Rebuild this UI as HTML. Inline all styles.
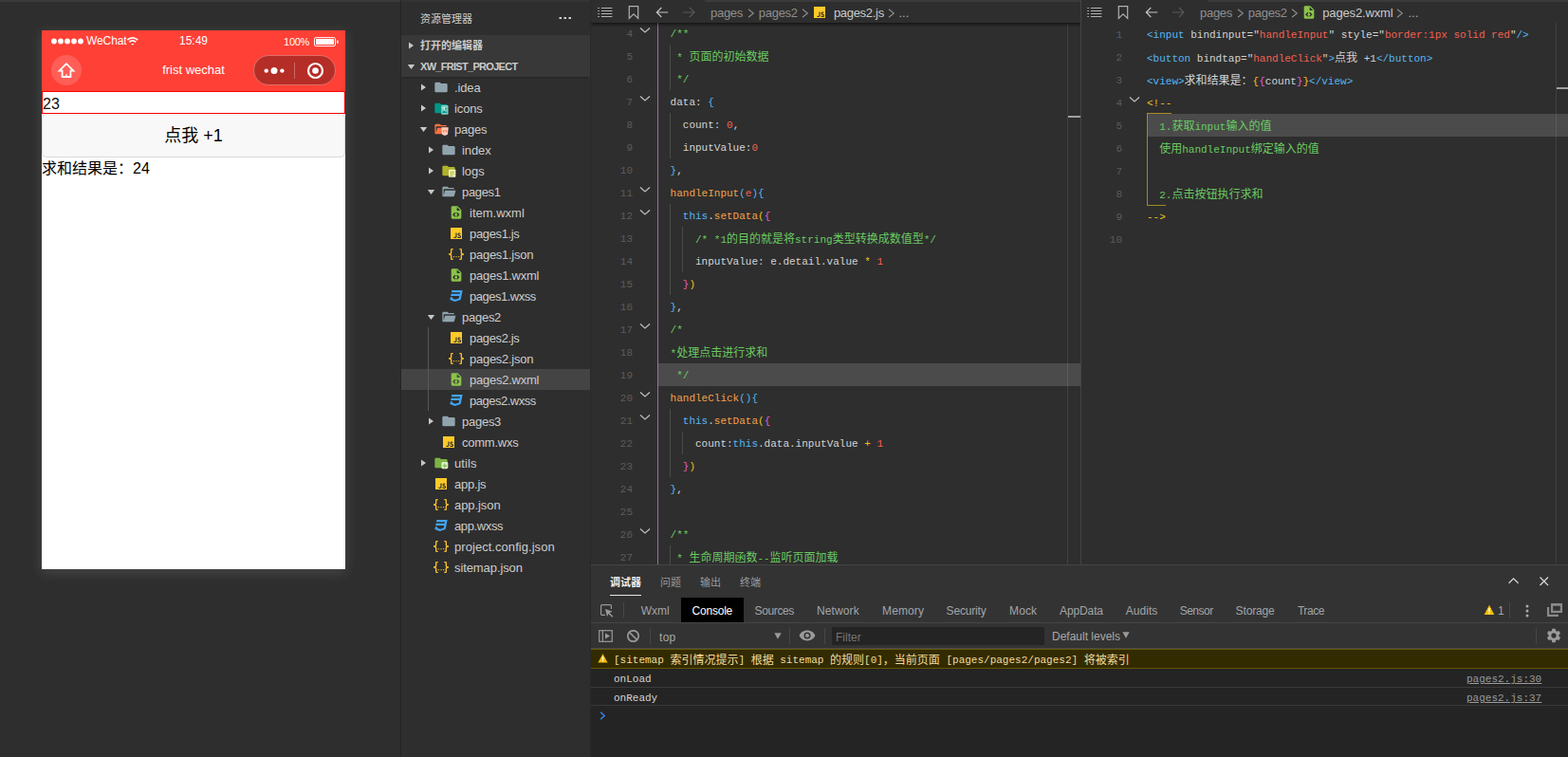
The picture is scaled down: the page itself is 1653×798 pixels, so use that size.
<!DOCTYPE html>
<html lang="zh"><head><meta charset="utf-8"><title>WeChat DevTools</title>
<style>
*{box-sizing:border-box;margin:0;padding:0}
html,body{width:1653px;height:798px;overflow:hidden;background:#2e2e2e}
body{position:relative;font-family:"Liberation Sans",sans-serif;color:#ccc;font-size:13px}
.abs{position:absolute}
.cj{display:inline-block;position:relative;white-space:nowrap;overflow:visible;vertical-align:baseline;letter-spacing:0;line-height:inherit;font-family:"Liberation Sans","Noto Sans CJK SC",sans-serif}
.mono{font-family:"Liberation Mono",monospace}
/* simulator */
#sim{left:0;top:0;width:422px;height:798px;background:#2e2e2e}
#simtop{left:0;top:0;width:422px;height:2px;background:#3a3a3a}
#phone{left:44px;top:32px;width:320px;height:568px;background:#fff;box-shadow:0 3px 12px 1px rgba(255,255,255,.12)}
#phead{left:0;top:0;width:320px;height:64px;background:#fe4036}
#vdiv{left:422px;top:0;width:1px;height:798px;background:#242424}
/* sidebar */
#side{left:423px;top:0;width:199px;height:798px;background:#2e2e2e}
.row{position:absolute;left:0;width:199px;height:22px;line-height:22px;white-space:nowrap;color:#cccccc;font-size:13px}
.row .lbl{position:absolute;top:0}
.sec{background:#383838;font-weight:bold;font-size:11px;color:#ccc}
/* editors */
.ed{background:#2e2e2e;overflow:hidden}
.bc{position:absolute;left:0;top:0;height:24px;width:100%;background:#2e2e2e;box-shadow:0 2px 3px rgba(0,0,0,.45);z-index:3;color:#9a9a9a;font-size:13px;line-height:24px}
.ln{position:absolute;height:24px;line-height:26px;font-family:"Liberation Mono",monospace;font-size:11px;white-space:pre;color:#d4d4d4}
.num{position:absolute;height:24px;line-height:26px;font-family:"Liberation Mono",monospace;font-size:11px;color:#5c5c5c;text-align:right;width:30px}
.g{color:#6acb62}.b{color:#56b6f2}.o{color:#f5a04a}.r{color:#f4604f}.y{color:#f1c21b}.p{color:#e35dd0}.w{color:#d4d4d4}
.guide{position:absolute;width:1px;background:#4a4a4a}
/* bottom panel */
.tab{font-size:12px;line-height:16px;height:16px;white-space:nowrap}
.con{font-family:"Liberation Mono",monospace;font-size:11px;line-height:18px;height:18px;white-space:pre}
#dbg{left:623px;top:595px;width:1030px;height:203px;background:#333333}
</style></head>
<body>

<div id="sim" class="abs"><div id="simtop" class="abs"></div>
<div id="phone" class="abs">
 <div id="phead" class="abs">
  <svg class="abs" style="left:0;top:0" width="320" height="64" viewBox="0 0 320 64">
   <g fill="#fff">
    <circle cx="13" cy="11.5" r="2.9"/><circle cx="20" cy="11.5" r="2.9"/><circle cx="27" cy="11.5" r="2.9"/><circle cx="34" cy="11.5" r="2.9"/><circle cx="41" cy="11.5" r="2.9"/>
   </g>
   <!-- wifi -->
   <g fill="none" stroke="#fff" stroke-width="1.7" stroke-linecap="butt">
    <path d="M90.3 10.2 A7.6 7.6 0 0 1 101.2 10.2"/>
    <path d="M92.4 12.3 A4.7 4.7 0 0 1 99.1 12.3"/>
   </g>
   <path d="M94.2 14 L97.3 14 L95.75 15.8 Z" fill="#fff"/>
   <!-- battery -->
   <rect x="287.5" y="7.6" width="22" height="9" rx="1.6" fill="none" stroke="#fff" stroke-width="1"/>
   <rect x="289" y="9.1" width="19" height="6" rx="0.6" fill="#fff"/>
   <path d="M311 10.4 h0.8 a0.9 0.9 0 0 1 0.9 0.9 v1.6 a0.9 0.9 0 0 1 -0.9 0.9 h-0.8 z" fill="#fff"/>
   <!-- home -->
   <circle cx="26" cy="42" r="16" fill="#ffffff" fill-opacity="0.16"/>
   <path d="M26 35.2 L18.6 42.6 L21.6 42.6 L21.6 49 L30.4 49 L30.4 42.6 L33.4 42.6 Z" fill="none" stroke="#fff" stroke-width="1.8" stroke-linejoin="miter"/>
   <rect x="25.3" y="46.2" width="1.4" height="2.8" fill="#fff"/>
   <!-- capsule -->
   <rect x="223.5" y="26.5" width="86" height="31" rx="15.5" fill="#000" fill-opacity="0.29" stroke="#ffffff" stroke-opacity="0.28" stroke-width="1"/>
   <circle cx="236.7" cy="42.6" r="2.2" fill="#fff"/><circle cx="245" cy="42.4" r="3.5" fill="#fff"/><circle cx="253.4" cy="42.6" r="2.2" fill="#fff"/>
   <rect x="266" y="34" width="1" height="17" fill="#fff" fill-opacity="0.3"/>
   <circle cx="288.5" cy="42.5" r="7.5" fill="none" stroke="#fff" stroke-width="2.2"/>
   <circle cx="288.5" cy="42.5" r="3.3" fill="#fff"/>
  </svg>
  <div class="abs" style="left:47px;top:4px;font-size:12px;line-height:14px;color:#fff;letter-spacing:-0.1px">WeChat</div>
  <div class="abs" style="left:120px;top:4px;width:80px;text-align:center;font-size:12px;line-height:14px;color:#fff">15:49</div>
  <div class="abs" style="left:240px;top:5px;width:42px;text-align:right;font-size:11px;line-height:14px;color:#fff;letter-spacing:-0.3px">100%</div>
  <div class="abs" style="left:100px;top:33px;width:120px;text-align:center;font-size:13px;line-height:18px;color:#fff">frist wechat</div>
 </div>
 <div class="abs" style="left:0;top:64px;width:320px;height:24px;border:1px solid #f00;background:#fff"></div>
 <div class="abs" style="left:1px;top:69px;font-size:16px;line-height:18px;color:#111">23</div>
 <div class="abs" style="left:0;top:88px;width:320px;height:46px;background:#f8f8f8;border-radius:5px;border:1px solid rgba(0,0,0,.12);border-top-color:rgba(0,0,0,.05)"></div>
 <div class="abs" style="left:0;top:88px;width:320px;height:46px;line-height:46px;text-align:center;font-size:18px;color:#000"><span class="cj" style="width:36px">点我</span> +1</div>
 <div class="abs" style="left:0;top:134px;height:24px;line-height:24px;font-size:16px;color:#000;white-space:nowrap"><span class="cj" style="width:96px">求和结果是：</span>24</div>
</div></div>
<div id="vdiv" class="abs"></div>

<svg width="0" height="0" style="position:absolute"><defs>
<symbol id="i-folder" viewBox="0 0 24 24"><path d="M10 4H4c-1.1 0-2 .9-2 2v12a2 2 0 002 2h16a2 2 0 002-2V8c0-1.1-.9-2-2-2h-8l-2-2z"/></symbol>
<symbol id="i-fopen" viewBox="0 0 24 24"><path d="M19 20H4c-1.11 0-2-.9-2-2V6c0-1.11.89-2 2-2h6l2 2h7a2 2 0 012 2H4v10l2.14-8h17.07l-2.28 8.5c-.23.87-1.01 1.5-1.93 1.5z"/></symbol>
<symbol id="i-js" viewBox="0 0 24 24"><path fill="#ffca28" d="M3 3h18v18H3V3m4.73 15.04c.4.85 1.19 1.55 2.54 1.55 1.5 0 2.53-.8 2.53-2.55v-5.78h-1.7V17c0 .86-.35 1.08-.9 1.08-.58 0-.82-.4-1.09-.87l-1.38.83m5.98-.18c.5.98 1.51 1.73 3.09 1.73 1.6 0 2.8-.83 2.8-2.36 0-1.41-.81-2.04-2.25-2.66l-.42-.18c-.73-.31-1.04-.52-1.04-1.02 0-.41.31-.73.81-.73.48 0 .8.21 1.09.73l1.31-.87c-.55-.96-1.33-1.33-2.4-1.33-1.51 0-2.48.96-2.48 2.23 0 1.38.81 2.03 2.03 2.55l.42.18c.78.34 1.24.55 1.24 1.13 0 .48-.45.83-1.15.83-.83 0-1.31-.43-1.67-1.03l-1.38.8z"/></symbol>
<symbol id="i-json" viewBox="0 0 24 24"><path fill="#fbc02d" d="M5 3h2v2H5v5a2 2 0 01-2 2 2 2 0 012 2v5h2v2H5c-1.07-.27-2-.9-2-2v-4a2 2 0 00-2-2H0v-2h1a2 2 0 002-2V5a2 2 0 012-2m14 0a2 2 0 012 2v4a2 2 0 002 2h1v2h-1a2 2 0 00-2 2v4a2 2 0 01-2 2h-2v-2h2v-5a2 2 0 012-2 2 2 0 01-2-2V5h-2V3h2m-7 12a1 1 0 011 1 1 1 0 01-1 1 1 1 0 01-1-1 1 1 0 011-1m-4 0a1 1 0 011 1 1 1 0 01-1 1 1 1 0 01-1-1 1 1 0 011-1m8 0a1 1 0 011 1 1 1 0 01-1 1 1 1 0 01-1-1 1 1 0 011-1z"/></symbol>
<symbol id="i-wxml" viewBox="0 0 24 24"><path fill="#8bc34a" d="M13 9h5.5L13 3.5V9M6 2h8l6 6v12a2 2 0 01-2 2H6a2 2 0 01-2-2V4c0-1.11.89-2 2-2m.12 13.5l3.74 3.74 1.42-1.41-2.33-2.33 2.33-2.33-1.42-1.41-3.74 3.74m11.16 0l-3.74-3.74-1.42 1.41 2.33 2.33-2.33 2.33 1.42 1.41 3.74-3.74z"/></symbol>
<symbol id="i-wxss" viewBox="0 0 24 24"><path fill="#42a5f5" d="M5 3l-.65 3.34h13.59L17.5 8.5H3.92l-.66 3.33h13.59l-.76 3.81-5.48 1.81-4.75-1.81.33-1.64H2.85l-.79 4 7.85 3 9.05-3 1.2-6.03.24-1.21L21.94 3H5z"/></symbol>
<symbol id="i-ficons" viewBox="0 0 24 24"><path fill="#009688" d="M10 4H4c-1.1 0-2 .9-2 2v12a2 2 0 002 2h16a2 2 0 002-2V8c0-1.1-.9-2-2-2h-8l-2-2z"/><rect x="12.3" y="7.5" width="11" height="14.5" rx="1.4" fill="#80cbc4"/><path d="M13.5 19.5l3-4 2 2.5 1.3-1.5 2 3z" fill="#009688"/><circle cx="19.6" cy="13" r="1.3" fill="#009688"/><path d="M14 11h4v4h-1.3v-2.7H14z" fill="#e0f2f1"/></symbol>
<symbol id="i-fpages" viewBox="0 0 24 24"><path fill="#ff7043" d="M19 20H4c-1.11 0-2-.9-2-2V6c0-1.11.89-2 2-2h6l2 2h7a2 2 0 012 2H4v10l2.14-8h17.07l-2.28 8.5c-.23.87-1.01 1.5-1.93 1.5z"/><path d="M12.5 9.5h11l-1 11-4.5 2-4.500-2z" fill="#ffccbc"/><path d="M16.6 13.2l-2 2 2 2 .8-.8-1.2-1.200 1.2-1.200zm2.800 0l-.8.8 1.200 1.200-1.200 1.200.8.8 2-2z" fill="#ff5722"/></symbol>
<symbol id="i-flogs" viewBox="0 0 24 24"><path fill="#afb42b" d="M10 4H4c-1.1 0-2 .9-2 2v12a2 2 0 002 2h16a2 2 0 002-2V8c0-1.1-.9-2-2-2h-8l-2-2z"/><rect x="12" y="10" width="11" height="12" rx="1" fill="#f0f4c3"/><path d="M14 13h7v1.500h-7zm0 3h7v1.500h-7zm0 3h4.500v1.500H14z" fill="#afb42b"/></symbol>
<symbol id="i-futils" viewBox="0 0 24 24"><path fill="#7cb342" d="M10 4H4c-1.1 0-2 .9-2 2v12a2 2 0 002 2h16a2 2 0 002-2V8c0-1.1-.9-2-2-2h-8l-2-2z"/><rect x="12.5" y="10.5" width="10.500" height="11" rx="2.200" fill="#dcedc8"/><path d="M17 13h1.600v2.700h2.700v1.600h-2.700V20H17v-2.700h-2.700v-1.600H17z" fill="#7cb342"/></symbol>
</defs></svg>
<div id="side" class="abs">
<div class="abs" style="left:0;top:0;width:199px;height:2px;background:#343434"></div>
<div class="abs" style="left:20px;top:11px;height:18px;line-height:18px;font-size:11px;color:#cfcfcf"><span class="cj" style="width:55px">资源管理器</span></div>
<svg class="abs" style="left:166px;top:16px" width="14" height="6" viewBox="0 0 14 6"><g fill="#d0d0d0"><rect x="0.500" y="2" width="2.500" height="2"/><rect x="5.500" y="2" width="2.500" height="2"/><rect x="10.500" y="2" width="2.500" height="2"/></g></svg>
<div class="row sec" style="top:37px;height:22px"><svg class="abs" style="left:7.3px;top:7px" width="7" height="8" viewBox="0 0 7 8"><path d="M1 0.600L6 4L1 7.400z" fill="#c8c8c8"/></svg><span class="lbl" style="left:20px"><span class="cj" style="width:66px">打开的编辑器</span></span></div>
<div class="row sec" style="top:59px;height:22px;box-shadow:0 3px 2px -2px rgba(0,0,0,.22);z-index:2"><svg class="abs" style="left:6.0px;top:8px" width="9" height="7" viewBox="0 0 9 7"><path d="M0.800 1h7.400L4.500 6z" fill="#c8c8c8"/></svg><span class="lbl" style="left:20px;letter-spacing:-0.700px">XW_FRIST_PROJECT</span></div>
<div class="row" style="top:81px"><svg class="abs" style="left:20.0px;top:7px" width="7" height="8" viewBox="0 0 7 8"><path d="M1 0.600L6 4L1 7.400z" fill="#c8c8c8"/></svg><svg class="abs" style="left:34px;top:3px" width="16" height="16" fill="#90a4ae"><use href="#i-folder"/></svg><span class="lbl" style="left:56px;top:1px;letter-spacing:-0.14px">.idea</span></div>
<div class="row" style="top:103px"><svg class="abs" style="left:20.0px;top:7px" width="7" height="8" viewBox="0 0 7 8"><path d="M1 0.600L6 4L1 7.400z" fill="#c8c8c8"/></svg><svg class="abs" style="left:34px;top:3px" width="16" height="16"><use href="#i-ficons"/></svg><span class="lbl" style="left:56px;top:1px;letter-spacing:-0.13px">icons</span></div>
<div class="row" style="top:125px"><svg class="abs" style="left:18.5px;top:8px" width="9" height="7" viewBox="0 0 9 7"><path d="M0.800 1h7.400L4.500 6z" fill="#c8c8c8"/></svg><svg class="abs" style="left:34px;top:3px" width="16" height="16"><use href="#i-fpages"/></svg><span class="lbl" style="left:56px;top:1px;letter-spacing:-0.26px">pages</span></div>
<div class="row" style="top:147px"><svg class="abs" style="left:28.0px;top:7px" width="7" height="8" viewBox="0 0 7 8"><path d="M1 0.600L6 4L1 7.400z" fill="#c8c8c8"/></svg><svg class="abs" style="left:42px;top:3px" width="16" height="16" fill="#90a4ae"><use href="#i-folder"/></svg><span class="lbl" style="left:64px;top:1px;letter-spacing:-0.08px">index</span></div>
<div class="row" style="top:169px"><svg class="abs" style="left:28.0px;top:7px" width="7" height="8" viewBox="0 0 7 8"><path d="M1 0.600L6 4L1 7.400z" fill="#c8c8c8"/></svg><svg class="abs" style="left:42px;top:3px" width="16" height="16"><use href="#i-flogs"/></svg><span class="lbl" style="left:64px;top:1px;letter-spacing:-0.04px">logs</span></div>
<div class="row" style="top:191px"><svg class="abs" style="left:26.5px;top:8px" width="9" height="7" viewBox="0 0 9 7"><path d="M0.800 1h7.400L4.500 6z" fill="#c8c8c8"/></svg><svg class="abs" style="left:42px;top:3px" width="16" height="16" fill="#90a4ae"><use href="#i-fopen"/></svg><span class="lbl" style="left:64px;top:1px;letter-spacing:-0.33px">pages1</span></div>
<div class="row" style="top:213px"><svg class="abs" style="left:50px;top:3px" width="16" height="16"><use href="#i-wxml"/></svg><span class="lbl" style="left:72px;top:1px;letter-spacing:0.00px">item.wxml</span></div>
<div class="row" style="top:235px"><svg class="abs" style="left:50px;top:3px" width="16" height="16"><use href="#i-js"/></svg><span class="lbl" style="left:72px;top:1px;letter-spacing:-0.35px">pages1.js</span></div>
<div class="row" style="top:257px"><svg class="abs" style="left:50px;top:3px" width="16" height="16"><use href="#i-json"/></svg><span class="lbl" style="left:72px;top:1px;letter-spacing:-0.27px">pages1.json</span></div>
<div class="row" style="top:279px"><svg class="abs" style="left:50px;top:3px" width="16" height="16"><use href="#i-wxml"/></svg><span class="lbl" style="left:72px;top:1px;letter-spacing:-0.24px">pages1.wxml</span></div>
<div class="row" style="top:301px"><svg class="abs" style="left:50px;top:3px" width="16" height="16"><use href="#i-wxss"/></svg><span class="lbl" style="left:72px;top:1px;letter-spacing:-0.49px">pages1.wxss</span></div>
<div class="row" style="top:323px"><svg class="abs" style="left:26.5px;top:8px" width="9" height="7" viewBox="0 0 9 7"><path d="M0.800 1h7.400L4.500 6z" fill="#c8c8c8"/></svg><svg class="abs" style="left:42px;top:3px" width="16" height="16" fill="#90a4ae"><use href="#i-fopen"/></svg><span class="lbl" style="left:64px;top:1px;letter-spacing:-0.26px">pages2</span></div>
<div class="row" style="top:345px"><svg class="abs" style="left:50px;top:3px" width="16" height="16"><use href="#i-js"/></svg><span class="lbl" style="left:72px;top:1px;letter-spacing:-0.35px">pages2.js</span></div>
<div class="row" style="top:367px"><svg class="abs" style="left:50px;top:3px" width="16" height="16"><use href="#i-json"/></svg><span class="lbl" style="left:72px;top:1px;letter-spacing:-0.27px">pages2.json</span></div>
<div class="row" style="top:389px;background:#444444"><svg class="abs" style="left:50px;top:3px" width="16" height="16"><use href="#i-wxml"/></svg><span class="lbl" style="left:72px;top:1px;letter-spacing:-0.24px">pages2.wxml</span></div>
<div class="row" style="top:411px"><svg class="abs" style="left:50px;top:3px" width="16" height="16"><use href="#i-wxss"/></svg><span class="lbl" style="left:72px;top:1px;letter-spacing:-0.49px">pages2.wxss</span></div>
<div class="row" style="top:433px"><svg class="abs" style="left:28.0px;top:7px" width="7" height="8" viewBox="0 0 7 8"><path d="M1 0.600L6 4L1 7.400z" fill="#c8c8c8"/></svg><svg class="abs" style="left:42px;top:3px" width="16" height="16" fill="#90a4ae"><use href="#i-folder"/></svg><span class="lbl" style="left:64px;top:1px;letter-spacing:-0.26px">pages3</span></div>
<div class="row" style="top:455px"><svg class="abs" style="left:42px;top:3px" width="16" height="16"><use href="#i-js"/></svg><span class="lbl" style="left:64px;top:1px;letter-spacing:-0.24px">comm.wxs</span></div>
<div class="row" style="top:477px"><svg class="abs" style="left:20.0px;top:7px" width="7" height="8" viewBox="0 0 7 8"><path d="M1 0.600L6 4L1 7.400z" fill="#c8c8c8"/></svg><svg class="abs" style="left:34px;top:3px" width="16" height="16"><use href="#i-futils"/></svg><span class="lbl" style="left:56px;top:1px;letter-spacing:0.10px">utils</span></div>
<div class="row" style="top:499px"><svg class="abs" style="left:34px;top:3px" width="16" height="16"><use href="#i-js"/></svg><span class="lbl" style="left:56px;top:1px;letter-spacing:-0.23px">app.js</span></div>
<div class="row" style="top:521px"><svg class="abs" style="left:34px;top:3px" width="16" height="16"><use href="#i-json"/></svg><span class="lbl" style="left:56px;top:1px;letter-spacing:-0.07px">app.json</span></div>
<div class="row" style="top:543px"><svg class="abs" style="left:34px;top:3px" width="16" height="16"><use href="#i-wxss"/></svg><span class="lbl" style="left:56px;top:1px;letter-spacing:-0.38px">app.wxss</span></div>
<div class="row" style="top:565px"><svg class="abs" style="left:34px;top:3px" width="16" height="16"><use href="#i-json"/></svg><span class="lbl" style="left:56px;top:1px;letter-spacing:0.05px">project.config.json</span></div>
<div class="row" style="top:587px"><svg class="abs" style="left:34px;top:3px" width="16" height="16"><use href="#i-json"/></svg><span class="lbl" style="left:56px;top:1px;letter-spacing:-0.09px">sitemap.json</span></div>
<div class="abs" style="left:28px;top:345px;width:1px;height:88px;background:#585858"></div>
</div>
<div class="abs" style="left:622px;top:0;width:1px;height:798px;background:#292929"></div>
<div id="ed1" class="abs ed" style="left:623px;top:0;width:516px;height:595px">
<div class="abs" style="left:120px;top:0;width:396px;height:2px;background:#3b3b3b;z-index:4"></div>
<div class="bc" style="box-shadow:0 2px 3px rgba(0,0,0,.55)">
<svg class="abs" style="left:0;top:0" width="140" height="24" viewBox="0 0 140 24">
 <g fill="#b4b4b4"><rect x="7.300" y="8" width="1.600" height="1"/><rect x="7.300" y="11" width="1.600" height="1"/><rect x="7.300" y="14" width="1.600" height="1"/><rect x="7.300" y="17" width="1.600" height="1"/>
 <rect x="10.900" y="8" width="11.500" height="1"/><rect x="10.900" y="11" width="11.500" height="1"/><rect x="10.900" y="14" width="11.500" height="1"/><rect x="10.900" y="17" width="11.500" height="1"/></g>
 <path d="M40.300 6.600h9.400v12.800l-4.700-4.600-4.700 4.600z" fill="none" stroke="#b0b0b0" stroke-width="1.200" stroke-linejoin="miter"/>
 <path d="M81.300 13H69.300M74.300 8l-5 5 5 5" fill="none" stroke="#c4c4c4" stroke-width="1.150"/>
 <path d="M97 13h12M104 8l5 5-5 5" fill="none" stroke="#585858" stroke-width="1.150"/>
</svg><span class="abs" style="left:126px;top:2px;color:#8f8f8f;letter-spacing:-0.28px">pages</span><svg class="abs" style="left:164.7px;top:8px" width="8" height="12" viewBox="0 0 8 12"><path d="M1 1.700l5.300 4.300-5.300 4.300" fill="none" stroke="#8a8a8a" stroke-width="1.200"/></svg><span class="abs" style="left:176.800px;top:2px;color:#8f8f8f;letter-spacing:-0.28px">pages2</span><svg class="abs" style="left:222.0px;top:8px" width="8" height="12" viewBox="0 0 8 12"><path d="M1 1.700l5.300 4.300-5.300 4.300" fill="none" stroke="#8a8a8a" stroke-width="1.200"/></svg><svg class="abs" style="left:233px;top:5px" width="16" height="16"><use href="#i-js"/></svg><span class="abs" style="left:255.900px;top:2px;color:#cacaca;letter-spacing:-0.30px">pages2.js</span><svg class="abs" style="left:312.9px;top:8px" width="8" height="12" viewBox="0 0 8 12"><path d="M1 1.700l5.300 4.300-5.300 4.300" fill="none" stroke="#8a8a8a" stroke-width="1.200"/></svg><span class="abs" style="left:324.500px;top:2px;color:#aaa">...</span></div>
<div class="abs" style="left:71px;top:383px;width:445px;height:24px;background:#4b4b4b"></div>
<div class="abs" style="left:70px;top:24px;width:1px;height:571px;background:#a868a2"></div>
<div class="guide" style="left:83px;top:47px;height:48px"></div>
<div class="guide" style="left:83px;top:119px;height:48px"></div>
<div class="guide" style="left:83px;top:215px;height:96px"></div>
<div class="guide" style="left:83px;top:383px;height:24px"></div>
<div class="guide" style="left:83px;top:431px;height:72px"></div>
<div class="guide" style="left:83px;top:575px;height:24px"></div>
<div class="guide" style="left:96px;top:239px;height:48px"></div>
<div class="guide" style="left:96px;top:455px;height:24px"></div>
<div class="num" style="left:14px;top:23px">4</div>
<svg class="abs" style="left:51px;top:28px" width="12" height="8" viewBox="0 0 12 8"><path d="M1 1.500l5 4.400 5-4.400" fill="none" stroke="#c0c0c0" stroke-width="1.200"/></svg>
<div class="ln" style="left:83.600px;top:23px"><span class="g">/**</span></div>
<div class="num" style="left:14px;top:47px">5</div>
<div class="ln" style="left:83.600px;top:47px"><span class="g"> * <span class="cj" style="width:84px;font-size:12px">页面的初始数据</span></span></div>
<div class="num" style="left:14px;top:71px">6</div>
<div class="ln" style="left:83.600px;top:71px"><span class="g"> */</span></div>
<div class="num" style="left:14px;top:95px">7</div>
<svg class="abs" style="left:51px;top:100px" width="12" height="8" viewBox="0 0 12 8"><path d="M1 1.500l5 4.400 5-4.400" fill="none" stroke="#c0c0c0" stroke-width="1.200"/></svg>
<div class="ln" style="left:83.600px;top:95px">data: <span class="b">{</span></div>
<div class="num" style="left:14px;top:119px">8</div>
<div class="ln" style="left:83.600px;top:119px">  count: <span class="r">0</span>,</div>
<div class="num" style="left:14px;top:143px">9</div>
<div class="ln" style="left:83.600px;top:143px">  inputValue:<span class="r">0</span></div>
<div class="num" style="left:14px;top:167px">10</div>
<div class="ln" style="left:83.600px;top:167px"><span class="b">}</span>,</div>
<div class="num" style="left:14px;top:191px">11</div>
<svg class="abs" style="left:51px;top:196px" width="12" height="8" viewBox="0 0 12 8"><path d="M1 1.500l5 4.400 5-4.400" fill="none" stroke="#c0c0c0" stroke-width="1.200"/></svg>
<div class="ln" style="left:83.600px;top:191px"><span class="o">handleInput</span><span class="b">(</span><span class="r">e</span><span class="b">){</span></div>
<div class="num" style="left:14px;top:215px">12</div>
<svg class="abs" style="left:51px;top:220px" width="12" height="8" viewBox="0 0 12 8"><path d="M1 1.500l5 4.400 5-4.400" fill="none" stroke="#c0c0c0" stroke-width="1.200"/></svg>
<div class="ln" style="left:83.600px;top:215px">  <span class="b">this</span>.<span class="o">setData</span><span class="y">(</span><span class="p">{</span></div>
<div class="num" style="left:14px;top:239px">13</div>
<div class="ln" style="left:83.600px;top:239px">    <span class="g">/* *1<span class="cj" style="width:72px;font-size:12px">的目的就是将</span>string<span class="cj" style="width:96px;font-size:12px">类型转换成数值型</span>*/</span></div>
<div class="num" style="left:14px;top:263px">14</div>
<div class="ln" style="left:83.600px;top:263px">    inputValue: e.detail.value <span class="y">*</span> <span class="r">1</span></div>
<div class="num" style="left:14px;top:287px">15</div>
<div class="ln" style="left:83.600px;top:287px">  <span class="p">}</span><span class="y">)</span></div>
<div class="num" style="left:14px;top:311px">16</div>
<div class="ln" style="left:83.600px;top:311px"><span class="b">}</span>,</div>
<div class="num" style="left:14px;top:335px">17</div>
<svg class="abs" style="left:51px;top:340px" width="12" height="8" viewBox="0 0 12 8"><path d="M1 1.500l5 4.400 5-4.400" fill="none" stroke="#c0c0c0" stroke-width="1.200"/></svg>
<div class="ln" style="left:83.600px;top:335px"><span class="g">/*</span></div>
<div class="num" style="left:14px;top:359px">18</div>
<div class="ln" style="left:83.600px;top:359px"><span class="g">*<span class="cj" style="width:96px;font-size:12px">处理点击进行求和</span></span></div>
<div class="num" style="left:14px;top:383px">19</div>
<div class="ln" style="left:83.600px;top:383px"><span class="g"> */</span></div>
<div class="num" style="left:14px;top:407px">20</div>
<svg class="abs" style="left:51px;top:412px" width="12" height="8" viewBox="0 0 12 8"><path d="M1 1.500l5 4.400 5-4.400" fill="none" stroke="#c0c0c0" stroke-width="1.200"/></svg>
<div class="ln" style="left:83.600px;top:407px"><span class="o">handleClick</span><span class="b">(){</span></div>
<div class="num" style="left:14px;top:431px">21</div>
<svg class="abs" style="left:51px;top:436px" width="12" height="8" viewBox="0 0 12 8"><path d="M1 1.500l5 4.400 5-4.400" fill="none" stroke="#c0c0c0" stroke-width="1.200"/></svg>
<div class="ln" style="left:83.600px;top:431px">  <span class="b">this</span>.<span class="o">setData</span><span class="y">(</span><span class="p">{</span></div>
<div class="num" style="left:14px;top:455px">22</div>
<div class="ln" style="left:83.600px;top:455px">    count:<span class="b">this</span>.data.inputValue <span class="y">+</span> <span class="r">1</span></div>
<div class="num" style="left:14px;top:479px">23</div>
<div class="ln" style="left:83.600px;top:479px">  <span class="p">}</span><span class="y">)</span></div>
<div class="num" style="left:14px;top:503px">24</div>
<div class="ln" style="left:83.600px;top:503px"><span class="b">}</span>,</div>
<div class="num" style="left:14px;top:527px">25</div>
<div class="ln" style="left:83.600px;top:527px"></div>
<div class="num" style="left:14px;top:551px">26</div>
<svg class="abs" style="left:51px;top:556px" width="12" height="8" viewBox="0 0 12 8"><path d="M1 1.500l5 4.400 5-4.400" fill="none" stroke="#c0c0c0" stroke-width="1.200"/></svg>
<div class="ln" style="left:83.600px;top:551px"><span class="g">/**</span></div>
<div class="num" style="left:14px;top:575px">27</div>
<div class="ln" style="left:83.600px;top:575px"><span class="g"> * <span class="cj" style="width:72px;font-size:12px">生命周期函数</span>--<span class="cj" style="width:72px;font-size:12px">监听页面加载</span></span></div>
<div class="abs" style="left:502px;top:24px;width:1px;height:571px;background:rgba(255,255,255,.09)"></div>
<div class="abs" style="left:503px;top:122px;width:13px;height:2px;background:#a0a0a0"></div>
</div>
<div class="abs" style="left:1139px;top:0;width:1px;height:595px;background:#444"></div>
<div id="ed2" class="abs ed" style="left:1140px;top:0;width:513px;height:595px">
<div class="abs" style="left:133px;top:0;width:380px;height:2px;background:#3b3b3b;z-index:4"></div>
<div class="bc" style="box-shadow:none"><div class="abs" style="left:-1px;top:0">
<svg class="abs" style="left:0;top:0" width="140" height="24" viewBox="0 0 140 24">
 <g fill="#b4b4b4"><rect x="7.300" y="8" width="1.600" height="1"/><rect x="7.300" y="11" width="1.600" height="1"/><rect x="7.300" y="14" width="1.600" height="1"/><rect x="7.300" y="17" width="1.600" height="1"/>
 <rect x="10.900" y="8" width="11.500" height="1"/><rect x="10.900" y="11" width="11.500" height="1"/><rect x="10.900" y="14" width="11.500" height="1"/><rect x="10.900" y="17" width="11.500" height="1"/></g>
 <path d="M40.300 6.600h9.400v12.800l-4.700-4.600-4.700 4.600z" fill="none" stroke="#b0b0b0" stroke-width="1.200" stroke-linejoin="miter"/>
 <path d="M81.300 13H69.300M74.300 8l-5 5 5 5" fill="none" stroke="#c4c4c4" stroke-width="1.150"/>
 <path d="M97 13h12M104 8l5 5-5 5" fill="none" stroke="#585858" stroke-width="1.150"/>
</svg><span class="abs" style="left:126px;top:2px;color:#8f8f8f;letter-spacing:-0.28px">pages</span><svg class="abs" style="left:164.7px;top:8px" width="8" height="12" viewBox="0 0 8 12"><path d="M1 1.700l5.300 4.300-5.300 4.300" fill="none" stroke="#8a8a8a" stroke-width="1.200"/></svg><span class="abs" style="left:176.800px;top:2px;color:#8f8f8f;letter-spacing:-0.28px">pages2</span><svg class="abs" style="left:222.0px;top:8px" width="8" height="12" viewBox="0 0 8 12"><path d="M1 1.700l5.300 4.300-5.300 4.300" fill="none" stroke="#8a8a8a" stroke-width="1.200"/></svg><svg class="abs" style="left:232.800px;top:5px" width="16" height="16"><use href="#i-wxml"/></svg><span class="abs" style="left:255.300px;top:2px;color:#cacaca;letter-spacing:-0.16px">pages2.wxml</span><svg class="abs" style="left:333.4px;top:8px" width="8" height="12" viewBox="0 0 8 12"><path d="M1 1.700l5.300 4.300-5.300 4.300" fill="none" stroke="#8a8a8a" stroke-width="1.200"/></svg><span class="abs" style="left:345.500px;top:2px;color:#aaa">...</span></div></div>
<div class="abs" style="left:69px;top:120px;width:444px;height:24px;background:#4b4b4b"></div>
<div class="abs" style="left:69px;top:119px;width:26px;height:98px;border-left:1px solid #a58a1e;border-top:1px solid #a58a1e;border-bottom:1px solid #a58a1e;border-right:0"></div>
<div class="abs" style="left:89px;top:216px;width:8px;height:1px;background:#2e2e2e"></div>
<div class="num" style="left:13px;top:24px">1</div>
<div class="ln" style="left:69px;top:24px"><span class="b">&lt;input</span> bindinput="<span class="r">handleInput</span>" style="<span class="r">border:1px solid red</span>"<span class="b">/&gt;</span></div>
<div class="num" style="left:13px;top:48px">2</div>
<div class="ln" style="left:69px;top:48px"><span class="b">&lt;button</span> bindtap="<span class="r">handleClick</span>"<span class="b">&gt;</span><span class="cj" style="width:24px;font-size:12px">点我</span> +1<span class="b">&lt;/button&gt;</span></div>
<div class="num" style="left:13px;top:72px">3</div>
<div class="ln" style="left:69px;top:72px"><span class="b">&lt;view&gt;</span><span class="cj" style="width:72px;font-size:12px">求和结果是：</span><span class="y">{</span><span class="p">{</span>count<span class="p">}</span><span class="y">}</span><span class="b">&lt;/view&gt;</span></div>
<div class="num" style="left:13px;top:96px">4</div>
<svg class="abs" style="left:50px;top:101px" width="12" height="8" viewBox="0 0 12 8"><path d="M1 1.500l5 4.400 5-4.400" fill="none" stroke="#c0c0c0" stroke-width="1.200"/></svg>
<div class="ln" style="left:69px;top:96px"><span class="y">&lt;!--</span></div>
<div class="num" style="left:13px;top:120px">5</div>
<div class="ln" style="left:69px;top:120px"><span class="g">  1.<span class="cj" style="width:24px;font-size:12px">获取</span>input<span class="cj" style="width:48px;font-size:12px">输入的值</span></span></div>
<div class="num" style="left:13px;top:144px">6</div>
<div class="ln" style="left:69px;top:144px"><span class="g">  <span class="cj" style="width:24px;font-size:12px">使用</span>handleInput<span class="cj" style="width:72px;font-size:12px">绑定输入的值</span></span></div>
<div class="num" style="left:13px;top:168px">7</div>
<div class="ln" style="left:69px;top:168px"></div>
<div class="num" style="left:13px;top:192px">8</div>
<div class="ln" style="left:69px;top:192px"><span class="g">  2.<span class="cj" style="width:96px;font-size:12px">点击按钮执行求和</span></span></div>
<div class="num" style="left:13px;top:216px">9</div>
<div class="ln" style="left:69px;top:216px"><span class="y">--&gt;</span></div>
<div class="num" style="left:13px;top:240px">10</div>
<div class="ln" style="left:69px;top:240px"></div>
<div class="abs" style="left:500px;top:24px;width:1px;height:571px;background:rgba(255,255,255,.09)"></div>
<div class="abs" style="left:501px;top:92px;width:12px;height:2px;background:#a0a0a0"></div>
</div>
<div id="dbg" class="abs">
<div class="abs" style="left:0;top:0;width:1030px;height:1px;background:#454545"></div>
<div class="abs" style="left:20px;top:11px;height:16px;line-height:16px;font-size:11px;color:#f0f0f0;font-weight:bold;"><span class="cj" style="width:33px">调试器</span></div>
<div class="abs" style="left:73px;top:11px;height:16px;line-height:16px;font-size:11px;color:#9a9a9a;"><span class="cj" style="width:22px">问题</span></div>
<div class="abs" style="left:115px;top:11px;height:16px;line-height:16px;font-size:11px;color:#9a9a9a;"><span class="cj" style="width:22px">输出</span></div>
<div class="abs" style="left:157px;top:11px;height:16px;line-height:16px;font-size:11px;color:#9a9a9a;"><span class="cj" style="width:22px">终端</span></div>
<div class="abs" style="left:20px;top:32px;width:33px;height:1px;background:#e6e6e6"></div>
<svg class="abs" style="left:967px;top:12px" width="46" height="12" viewBox="0 0 46 12"><path d="M0.600 7.800l5-5 5 5" fill="none" stroke="#d4d4d4" stroke-width="1.300"/><path d="M33.500 1.500l8.500 8.500M42 1.500l-8.500 8.500" fill="none" stroke="#d4d4d4" stroke-width="1.300"/></svg>
<div class="abs" style="left:0;top:61px;width:1030px;height:1px;background:#464646"></div>
<svg class="abs" style="left:8px;top:40px" width="16" height="16" viewBox="0 0 16 16"><path d="M7 13.400H3.600a1 1 0 0 1-1-1V3.600a1 1 0 0 1 1-1h8.800a1 1 0 0 1 1 1V7" fill="none" stroke="#989898" stroke-width="1.200"/><path d="M7 7l7.600 2.500-2.900 1.500 3.700 3.700-1.100 1.100-3.700-3.700-1.500 2.900z" fill="#989898"/></svg>
<div class="abs" style="left:34px;top:40px;width:1px;height:16px;background:#474747"></div>
<div class="abs" style="left:95px;top:35px;width:66px;height:26px;background:#000"></div>
<div class="abs tab" style="left:52.7px;top:41px;color:#a2a5a9;letter-spacing:-0.03px">Wxml</div>
<div class="abs tab" style="left:106.6px;top:41px;color:#ffffff;letter-spacing:-0.23px">Console</div>
<div class="abs tab" style="left:172.6px;top:41px;color:#a2a5a9;letter-spacing:-0.39px">Sources</div>
<div class="abs tab" style="left:237.9px;top:41px;color:#a2a5a9;letter-spacing:0.13px">Network</div>
<div class="abs tab" style="left:307.1px;top:41px;color:#a2a5a9;letter-spacing:0.09px">Memory</div>
<div class="abs tab" style="left:374.6px;top:41px;color:#a2a5a9;letter-spacing:-0.18px">Security</div>
<div class="abs tab" style="left:441.1px;top:41px;color:#a2a5a9;letter-spacing:0.06px">Mock</div>
<div class="abs tab" style="left:494.0px;top:41px;color:#a2a5a9;letter-spacing:-0.11px">AppData</div>
<div class="abs tab" style="left:563.8px;top:41px;color:#a2a5a9;letter-spacing:0.04px">Audits</div>
<div class="abs tab" style="left:620.7px;top:41px;color:#a2a5a9;letter-spacing:-0.51px">Sensor</div>
<div class="abs tab" style="left:679.6px;top:41px;color:#a2a5a9;letter-spacing:-0.15px">Storage</div>
<div class="abs tab" style="left:744.9px;top:41px;color:#a2a5a9;letter-spacing:-0.41px">Trace</div>
<svg class="abs" style="left:941px;top:42px" width="12" height="12" viewBox="0 0 12 12"><path d="M6 0.800L11.300 11H0.700z" fill="#f4bd00"/><rect x="5.300" y="4" width="1.400" height="4" fill="#fff"/><rect x="5.300" y="8.800" width="1.400" height="1.300" fill="#fff"/></svg>
<div class="abs tab" style="left:956px;top:41px;color:#a2a5a9">1</div>
<div class="abs" style="left:968px;top:40px;width:1px;height:16px;background:#474747"></div>
<svg class="abs" style="left:985px;top:42px" width="4" height="14" viewBox="0 0 4 14"><g fill="#ababab"><circle cx="2" cy="2" r="1.500"/><circle cx="2" cy="7" r="1.500"/><circle cx="2" cy="12" r="1.500"/></g></svg>
<svg class="abs" style="left:1007px;top:40px" width="18" height="16" viewBox="0 0 18 16"><path d="M5 1h12v10H5zM7.200 3.800v5h7.600v-5z" fill="#8a8a8a" fill-rule="evenodd"/><path d="M1 5h2.200v7.800H13V15H1z" fill="#8a8a8a"/></svg>
<div class="abs" style="left:0;top:88px;width:1030px;height:1px;background:#4a4a4a"></div>
<svg class="abs" style="left:8px;top:69px" width="16" height="14" viewBox="0 0 16 14"><rect x="0.700" y="0.700" width="13.600" height="11.600" fill="none" stroke="#9a9a9a" stroke-width="1.200"/><rect x="3.800" y="0.700" width="1.200" height="11.600" fill="#9a9a9a"/><path d="M7 3.400l5.100 3.100-5.100 3.100z" fill="#9a9a9a"/></svg>
<svg class="abs" style="left:37px;top:69px" width="14" height="14" viewBox="0 0 14 14"><circle cx="7.500" cy="6.500" r="5.700" fill="none" stroke="#9a9a9a" stroke-width="1.700"/><path d="M3.500 2.500l8 8" stroke="#9a9a9a" stroke-width="1.700"/></svg>
<div class="abs" style="left:62px;top:67px;width:1px;height:17px;background:#474747"></div>
<div class="abs" style="left:209px;top:67px;width:1px;height:17px;background:#474747"></div>
<div class="abs" style="left:246px;top:67px;width:1px;height:17px;background:#474747"></div>
<div class="abs" style="left:996px;top:67px;width:1px;height:17px;background:#474747"></div>
<div class="abs tab" style="left:72px;top:69px;color:#a8a8a8;letter-spacing:0.3px">top</div>
<svg class="abs" style="left:193px;top:72px" width="8" height="7" viewBox="0 0 8 7"><path d="M0.300 0.300h7.400L4 6.700z" fill="#9a9a9a"/></svg>
<svg class="abs" style="left:219px;top:69px" width="18" height="12" viewBox="0 0 18 12"><path d="M9 0.600C5 0.600 1.800 3 0.600 6c1.200 3 4.400 5.400 8.400 5.400s7.200-2.400 8.400-5.400C16.200 3 13 0.600 9 0.600z" fill="#9a9a9a"/><circle cx="9" cy="6" r="3.600" fill="#333"/><circle cx="9" cy="6" r="2" fill="#9a9a9a"/></svg>
<div class="abs" style="left:254px;top:66px;width:224px;height:19px;background:#242424"></div>
<div class="abs tab" style="left:258px;top:69px;color:#757575">Filter</div>
<div class="abs tab" style="left:486px;top:68px;color:#a8a8a8">Default levels</div>
<svg class="abs" style="left:560px;top:71px" width="8" height="7" viewBox="0 0 8 7"><path d="M0.300 0.300h7.400L4 6.700z" fill="#9a9a9a"/></svg>
<svg class="abs" style="left:1006px;top:66px" width="18" height="18" viewBox="0 0 24 24"><path d="M19.140 12.940c.040-.3.060-.610.060-.940 0-.320-.020-.640-.070-.940l2.030-1.580c.180-.140.230-.410.120-.610l-1.920-3.320c-.120-.220-.370-.290-.590-.220l-2.390.960c-.5-.380-1.030-.7-1.620-.940l-.360-2.540c-.040-.240-.240-.410-.480-.410h-3.840c-.240 0-.430.170-.470.410l-.360 2.540c-.590.240-1.130.570-1.620.940l-2.390-.960c-.220-.080-.470 0-.590.220L2.740 8.870c-.120.210-.080.470.120.610l2.030 1.580c-.050.3-.090.630-.090.940s.020.640.070.940l-2.030 1.580c-.180.140-.230.410-.120.610l1.920 3.320c.12.220.370.290.590.220l2.390-.960c.5.380 1.030.7 1.620.940l.360 2.540c.050.240.240.410.480.410h3.840c.240 0 .440-.170.470-.410l.360-2.540c.590-.240 1.130-.560 1.620-.940l2.390.960c.220.080.470 0 .590-.220l1.920-3.320c.12-.220.070-.470-.120-.610l-2.010-1.580zM12 15.600c-1.980 0-3.600-1.620-3.600-3.600s1.620-3.600 3.600-3.600 3.600 1.620 3.600 3.600-1.620 3.600-3.600 3.600z" fill="#9b9b9b"/></svg>
<div class="abs" style="left:0;top:89px;width:1030px;height:114px;background:#242424"></div>
<div class="abs" style="left:0;top:89px;width:1030px;height:21px;background:#332b00;border-top:1px solid #665500;border-bottom:1px solid #665500"></div>
<svg class="abs" style="left:6.5px;top:94.3px" width="11" height="10" viewBox="0 0 12 11"><path d="M6 0.300L11.600 10.500H0.400z" fill="#f4bd00"/><rect x="5.300" y="3.500" width="1.400" height="3.800" fill="#fff"/><rect x="5.300" y="8" width="1.400" height="1.300" fill="#fff"/></svg>
<div class="abs con" style="left:24px;top:91px;color:#f3dc9c">[sitemap <span class="cj" style="width:72px;font-size:12px;top:1px">索引情况提示</span>] <span class="cj" style="width:24px;font-size:12px;top:1px">根据</span> sitemap <span class="cj" style="width:36px;font-size:12px;top:1px">的规则</span>[0]<span class="cj" style="width:60px;font-size:12px;top:1px">，当前页面</span> [pages/pages2/pages2] <span class="cj" style="width:48px;font-size:12px;top:1px">将被索引</span></div>
<div class="abs con" style="left:24px;top:112px;color:#d4d4d4">onLoad</div>
<div class="abs con" style="left:24px;top:132px;color:#d4d4d4">onReady</div>
<div class="abs con" style="left:923px;top:112px;color:#9a9a9a;text-decoration:underline">pages2.js:30</div>
<div class="abs con" style="left:923px;top:132px;color:#9a9a9a;text-decoration:underline">pages2.js:37</div>
<div class="abs" style="left:0;top:129px;width:1030px;height:1px;background:#3a3a3a"></div>
<div class="abs" style="left:0;top:148px;width:1030px;height:1px;background:#3a3a3a"></div>
<svg class="abs" style="left:9px;top:155px" width="7" height="9" viewBox="0 0 7 9"><path d="M1.200 0.800l4 3.700-4 3.700" fill="none" stroke="#3c86f2" stroke-width="1.400"/></svg>
</div>
</body></html>
